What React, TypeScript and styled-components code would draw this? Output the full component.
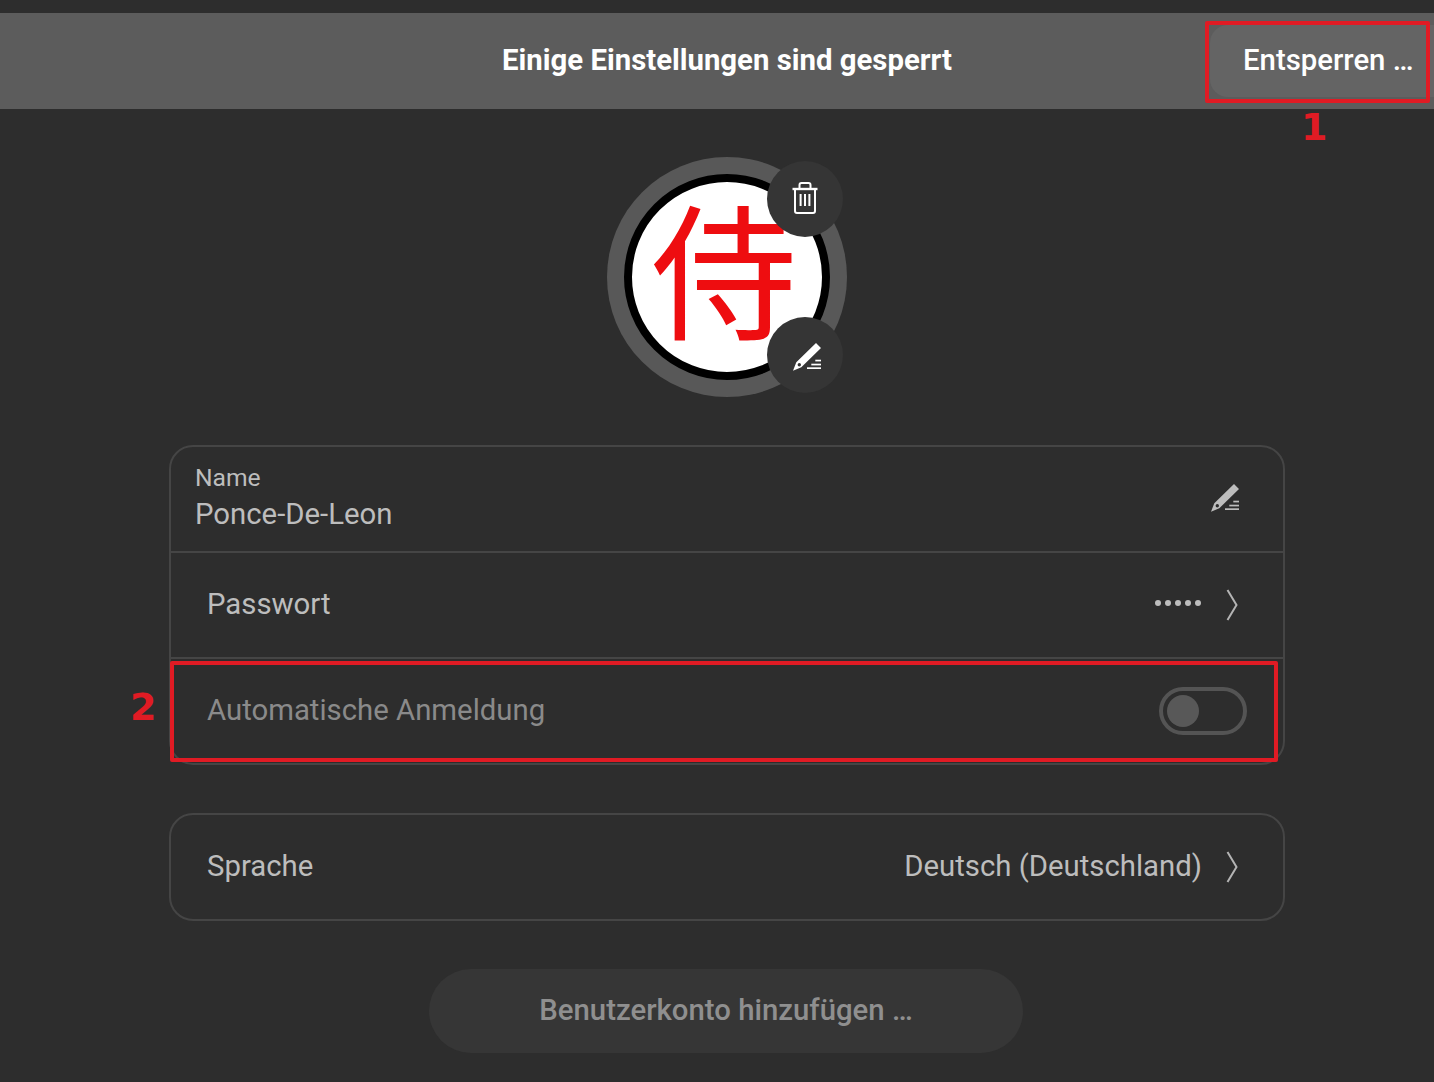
import React from 'react';
import styled, { createGlobalStyle } from 'styled-components';

const GlobalStyle = createGlobalStyle`
  html, body {
    margin: 0;
    padding: 0;
    background: #2d2d2d;
    overflow: hidden;
  }
  * { box-sizing: border-box; }
`;

const Page = styled.div`
  position: relative;
  width: 1434px;
  height: 1082px;
  padding-top: 13px;
  overflow: hidden;
  background: #2d2d2d;
  color: #bdbdbd;
  font-family: Roboto, "Liberation Sans", sans-serif;
  font-size: 29.33px;
`;

const Banner = styled.div`
  position: relative;
  height: 96px;
  display: flex;
  align-items: center;
  justify-content: center;
  background: #5c5c5c;
  padding: 0 0 2px 20px;
  color: #fff;
  font-weight: 700;
`;

const UnlockButton = styled.div`
  position: absolute;
  top: 12px;
  right: 0;
  width: 224px;
  height: 72px;
  padding: 0 0 2px 33px;
  display: flex;
  align-items: center;
  border-radius: 18px 0 0 18px;
  background: #646464;
  font-weight: 500;
  white-space: nowrap;
`;

const Content = styled.div`
  padding-left: 20px;
`;

const AvatarWrap = styled.div`
  position: relative;
  width: 240px;
  height: 240px;
  margin: 48px auto;
`;

const AvatarRing = styled.div`
  width: 240px;
  height: 240px;
  border-radius: 50%;
  background: #585858;
  display: flex;
  align-items: center;
  justify-content: center;
`;

const AvatarImage = styled.div`
  width: 206px;
  height: 206px;
  border-radius: 50%;
  border: 8px solid #000;
  background: #fff;
  color: #ee0d10;
  display: flex;
  align-items: center;
  justify-content: center;
  font-family: "Noto Sans CJK JP", sans-serif;
  font-size: 146px;
  line-height: 1;
  font-weight: 400;
`;

const AvatarGlyph = styled.span`
  display: block;
  margin: -24px 6px 0 0;
`;

const AvatarButton = styled.div<{ $top: number }>`
  position: absolute;
  left: 160px;
  top: ${p => p.$top}px;
  width: 76px;
  height: 76px;
  border-radius: 50%;
  background: #353535;
  display: flex;
  align-items: center;
  justify-content: center;
`;

const TrashSlot = styled.span`
  display: flex;
  margin-bottom: 3px;
`;

const PencilSlot = styled.span`
  display: flex;
  margin: 4px 0 0 4px;
`;

const EntryPencilSlot = styled.span`
  display: flex;
  margin: 4px 1px 0 0;
`;

const Group = styled.div`
  width: 1116px;
  margin: 0 auto 48px;
  border: 2px solid #454545;
  border-radius: 24px;
`;

const Row = styled.div<{ $first?: boolean }>`
  height: ${p => (p.$first ? 104 : 106)}px;
  padding: 0 44px 2px 36px;
  display: flex;
  align-items: center;
  justify-content: space-between;
  border-top: ${p => (p.$first ? 'none' : '2px solid #454545')};
`;

const EntryRow = styled(Row)`
  padding: 0 42px 6px 24px;
`;

const EntryText = styled.div`
  display: flex;
  flex-direction: column;
`;

const EntryLabel = styled.div`
  font-size: 24.67px;
  line-height: 28px;
  margin-top: 3px;
`;

const EntryValue = styled.div`
  line-height: 36px;
  margin-top: 4px;
`;

const RowLabel = styled.div<{ $disabled?: boolean }>`
  color: ${p => (p.$disabled ? '#8a8a8a' : 'inherit')};
`;

const RowEnd = styled.div`
  display: flex;
  align-items: center;
  gap: 24px;
`;

const Dots = styled.div`
  display: flex;
  gap: 4px;
  margin: 0 1px 2px 0;
`;

const Dot = styled.span`
  width: 6px;
  height: 6px;
  border-radius: 50%;
  background: #bdbdbd;
`;

const Toggle = styled.div`
  width: 88px;
  height: 48px;
  border-radius: 24px;
  border: 4px solid #545454;
  padding: 4px;
  margin: 2px -8px 0 0;
`;

const ToggleKnob = styled.div`
  width: 32px;
  height: 32px;
  border-radius: 50%;
  background: #585858;
`;

const AddButton = styled.div`
  width: 594px;
  height: 84px;
  margin-left: 409px;
  padding-bottom: 2px;
  border-radius: 42px;
  background: #363636;
  color: #8f8f8f;
  font-weight: 500;
  display: flex;
  align-items: center;
  justify-content: center;
`;

const Highlight = styled.div<{ $l: number; $t: number; $w: number; $h: number }>`
  position: absolute;
  left: ${p => p.$l}px;
  top: ${p => p.$t}px;
  width: ${p => p.$w}px;
  height: ${p => p.$h}px;
  border: 4px solid #e01b24;
  border-radius: 2px;
  pointer-events: none;
`;

const Marker = styled.div<{ $l: number; $t: number }>`
  position: absolute;
  left: ${p => p.$l}px;
  top: ${p => p.$t}px;
  color: #e01b24;
  font-family: "DejaVu Sans", sans-serif;
  font-weight: 700;
  font-size: 38px;
  line-height: 38px;
`;

const ChevronIcon = styled.svg`
  display: block;
  margin: 2px 1px 0 0;
`;

const Pencil = ({ color = '#fff' }: { color?: string }) => (
  <svg width="30" height="30" viewBox="0 0 30 30">
    <path
      fillRule="evenodd"
      d="M24 1 L29 6 L9.3 25.3 L1 28.7 L4.3 20.3 Z M7.3 24.4 A1.7 1.7 0 1 0 7.3 21 A1.7 1.7 0 1 0 7.3 24.4 Z"
      fill={color}
    />
    <rect x="23.3" y="17.7" width="5.7" height="1.7" fill={color} />
    <rect x="19.3" y="21.7" width="9.7" height="1.7" fill={color} />
    <rect x="15" y="25.3" width="14" height="1.7" fill={color} />
  </svg>
);

const Trash = () => (
  <svg width="26" height="32" viewBox="0 0 26 32" fill="none" stroke="#fff">
    <path d="M7.5 6 V3 C7.5 1.8 8.3 1 9.5 1 H16.5 C17.7 1 18.5 1.8 18.5 3 V6" strokeWidth="2" />
    <path d="M0.5 7 H25.5" strokeWidth="2.4" />
    <path d="M3 8 V29 C3 30.2 3.8 31 5 31 H21 C22.2 31 23 30.2 23 29 V8" strokeWidth="2" />
    <path d="M8.6 12 V24 M13 12 V24 M17.4 12 V24" strokeWidth="2" />
  </svg>
);

const Chevron = () => (
  <ChevronIcon width="12" height="32" viewBox="0 0 12 32" fill="none">
    <path d="M1.5 1 L10.5 16 L1.5 31" stroke="#b4b4b4" strokeWidth="2" />
  </ChevronIcon>
);

export default function App() {
  return (
    <Page>
      <GlobalStyle />
      <Banner>
        Einige Einstellungen sind gesperrt
        <UnlockButton>Entsperren …</UnlockButton>
      </Banner>

      <Content>
        <AvatarWrap>
          <AvatarRing>
            <AvatarImage>
              <AvatarGlyph>侍</AvatarGlyph>
            </AvatarImage>
          </AvatarRing>
          <AvatarButton $top={4}>
            <TrashSlot>
              <Trash />
            </TrashSlot>
          </AvatarButton>
          <AvatarButton $top={160}>
            <PencilSlot>
              <Pencil />
            </PencilSlot>
          </AvatarButton>
        </AvatarWrap>

        <Group>
          <EntryRow $first>
            <EntryText>
              <EntryLabel>Name</EntryLabel>
              <EntryValue>Ponce-De-Leon</EntryValue>
            </EntryText>
            <EntryPencilSlot>
              <Pencil color="#bdbdbd" />
            </EntryPencilSlot>
          </EntryRow>
          <Row>
            <RowLabel>Passwort</RowLabel>
            <RowEnd>
              <Dots>
                <Dot />
                <Dot />
                <Dot />
                <Dot />
                <Dot />
              </Dots>
              <Chevron />
            </RowEnd>
          </Row>
          <Row>
            <RowLabel $disabled>Automatische Anmeldung</RowLabel>
            <Toggle>
              <ToggleKnob />
            </Toggle>
          </Row>
        </Group>

        <Group>
          <Row $first>
            <RowLabel>Sprache</RowLabel>
            <RowEnd>
              Deutsch (Deutschland)
              <Chevron />
            </RowEnd>
          </Row>
        </Group>

        <AddButton>Benutzerkonto hinzufügen …</AddButton>
      </Content>

      <Highlight $l={1205} $t={21} $w={225} $h={82} />
      <Marker $l={1301} $t={108}>1</Marker>
      <Highlight $l={170} $t={661} $w={1108} $h={101} />
      <Marker $l={130} $t={688}>2</Marker>
    </Page>
  );
}
